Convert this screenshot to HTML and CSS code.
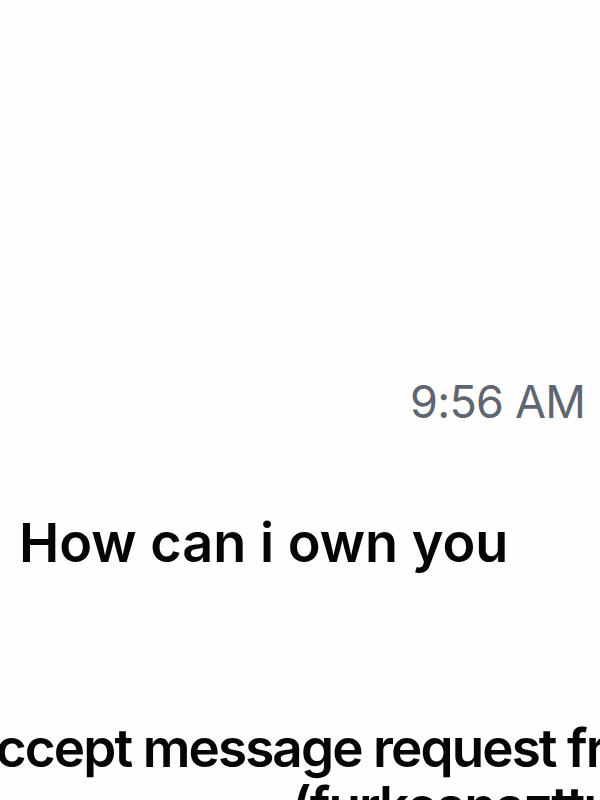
FILE: index.html
```html
<!DOCTYPE html>
<html>
<head>
<meta charset="utf-8">
<link rel="stylesheet" href="styles.css">
</head>
<body>
<div class="screen">
  <div class="time">9:56 AM</div>
  <div class="message">How can i own you</div>
  <div class="request">
    <div class="req-line first">Accept message request from</div>
    <div class="req-line second">(furkcanazttu)</div>
  </div>
</div>
</body>
</html>
```
FILE: styles.css
```css
html, body {
  margin: 0;
  padding: 0;
  background: #fefefe;
}
.screen {
  width: 600px;
  height: 800px;
  overflow: hidden;
  font-family: Inter, "Noto Sans", sans-serif;
  display: flex;
  flex-direction: column;
}
.time {
  margin-top: 379px;
  font-size: 45px;
  line-height: 1;
  color: #5f6571;
  text-align: right;
  padding-right: 15px;
  letter-spacing: -0.8px;
}
.message {
  margin-top: 92px;
  font-size: 54px;
  line-height: 1;
  font-weight: 600;
  color: #050505;
  padding-left: 19px;
  letter-spacing: 0px;
}
.request {
  margin-top: 149px;
  font-size: 53px;
  line-height: 58px;
  font-weight: 600;
  color: #050505;
  white-space: nowrap;
  letter-spacing: -1.9px;
}
.req-line.first {
  margin-left: -40px;
}
.req-line.second {
  padding-left: 292px;
}
```
